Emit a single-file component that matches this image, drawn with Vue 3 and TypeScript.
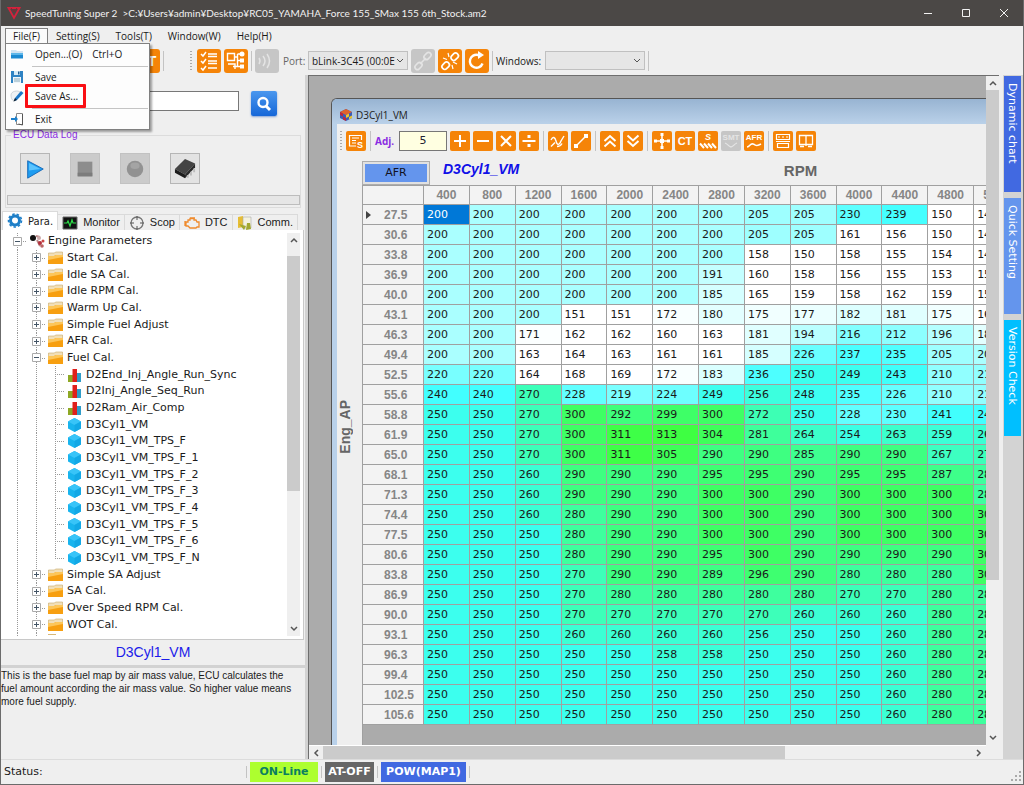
<script setup lang="ts">
import { ref } from 'vue'

interface Shape { d: string; fill?: boolean; w?: number }
interface Label { t: string; x: number; y: number; s: number; italic?: boolean }
interface Glyph { id: string; title: string; shapes: Shape[]; label?: Label; off?: boolean }
interface TreeNode { label: string; level: number; icon: string; sign?: string; last?: boolean }
interface MapRow { load: string; values: number[] }

const adjust = ref('5')
const port = ref('bLink-3C45 (00:0E:')
const filter = ref('')
const activeWindow = ref('')

const menus = ['File(F)', 'Setting(S)', 'Tools(T)', 'Window(W)', 'Help(H)']

const toolGroups: Glyph[][] = [
  [
    { id: 'add', title: 'Add', shapes: [{ d: 'M10 4v12M4 10h12', w: 2 }] },
    { id: 'sub', title: 'Subtract', shapes: [{ d: 'M4 10h12', w: 2 }] },
    { id: 'mul', title: 'Multiply', shapes: [{ d: 'M5 5l10 10M15 5L5 15', w: 2 }] },
    { id: 'div', title: 'Divide', shapes: [{ d: 'M3.500 10h13', w: 2 }, { d: 'M8.500 4h3v3h-3zM8.500 13h3v3h-3z', fill: true }] },
  ],
  [
    { id: 'smooth', title: 'Smooth', shapes: [{ d: 'M3 9c2-4 4-3 5 1s3 5 5 0l3-5M3 15.500l4-4M9 15.500c3 0 4-1 5-3', w: 1.4 }] },
    { id: 'line', title: 'Interpolate', shapes: [{ d: 'M5 15L15 5', w: 1.4 }, { d: 'M3 13h4v4H3zM13 3h4v4h-4z', fill: true }] },
  ],
  [
    { id: 'up', title: 'Increase', shapes: [{ d: 'M4.500 10L10 5l5.500 5M4.500 15.500L10 10.500l5.500 5', w: 2 }] },
    { id: 'down', title: 'Decrease', shapes: [{ d: 'M4.500 4.500L10 9.500l5.500-5M4.500 10L10 15l5.500-5', w: 2 }] },
  ],
  [
    { id: 'move', title: 'Move', shapes: [{ d: 'M10 4v12M4 10h12', w: 1.6 }, { d: 'M8.500 2h3v3h-3zM8.500 15h3v3h-3zM2 8.500h3v3H2zM15 8.500h3v3h-3zM8 8h4v4H8z', fill: true }] },
    { id: 'ct', title: 'CT', shapes: [], label: { t: 'CT', x: 10, y: 14, s: 11 } },
    { id: 's', title: 'Set', shapes: [{ d: 'M2 12.500l4 4.500M6 12.500l4 4.500M10 12.500l4 4.500M14 12.500l4 4.500', w: 2 }], label: { t: 'S', x: 10, y: 9, s: 9, italic: true } },
    { id: 'smt', title: 'SMT', off: true, shapes: [{ d: 'M4 12c3 1 4 4 6 4s3-3 6-4', w: 1.3 }], label: { t: 'SMT', x: 10, y: 9, s: 8 } },
    { id: 'afr', title: 'AFR', shapes: [{ d: 'M3 16c3 0 3-4 6-3s3 3 8 0', w: 1.5 }], label: { t: 'AFR', x: 10, y: 9, s: 8 } },
  ],
  [
    { id: 'rows', title: 'Split rows', shapes: [{ d: 'M3.500 3.500h13v5h-13zM5 6h2M9 6h2M13 6h2M3 10.500h14M4.500 12.500h11v4h-11z', w: 1.2 }] },
    { id: 'cols', title: 'Split columns', shapes: [{ d: 'M3.500 4.500h13v9h-13zM10 4.500V15M4 15.500h4M12 15.500h4', w: 1.3 }] },
  ],
]

const tree: TreeNode[] = [
  { label: 'Engine Parameters', level: 0, icon: 'engine', sign: '-' },
  { label: 'Start Cal.', level: 1, icon: 'folder', sign: '+' },
  { label: 'Idle SA Cal.', level: 1, icon: 'folder', sign: '+' },
  { label: 'Idle RPM Cal.', level: 1, icon: 'folder', sign: '+' },
  { label: 'Warm Up Cal.', level: 1, icon: 'folder', sign: '+' },
  { label: 'Simple Fuel Adjust', level: 1, icon: 'folder', sign: '+' },
  { label: 'AFR Cal.', level: 1, icon: 'folder', sign: '+' },
  { label: 'Fuel Cal.', level: 1, icon: 'folder', sign: '-' },
  { label: 'D2End_Inj_Angle_Run_Sync', level: 2, icon: 'bars' },
  { label: 'D2Inj_Angle_Seq_Run', level: 2, icon: 'bars' },
  { label: 'D2Ram_Air_Comp', level: 2, icon: 'bars' },
  { label: 'D3Cyl1_VM', level: 2, icon: 'cube' },
  { label: 'D3Cyl1_VM_TPS_F', level: 2, icon: 'cube' },
  { label: 'D3Cyl1_VM_TPS_F_1', level: 2, icon: 'cube' },
  { label: 'D3Cyl1_VM_TPS_F_2', level: 2, icon: 'cube' },
  { label: 'D3Cyl1_VM_TPS_F_3', level: 2, icon: 'cube' },
  { label: 'D3Cyl1_VM_TPS_F_4', level: 2, icon: 'cube' },
  { label: 'D3Cyl1_VM_TPS_F_5', level: 2, icon: 'cube' },
  { label: 'D3Cyl1_VM_TPS_F_6', level: 2, icon: 'cube' },
  { label: 'D3Cyl1_VM_TPS_F_N', level: 2, icon: 'cube', last: true },
  { label: 'Simple SA Adjust', level: 1, icon: 'folder', sign: '+' },
  { label: 'SA Cal.', level: 1, icon: 'folder', sign: '+' },
  { label: 'Over Speed RPM Cal.', level: 1, icon: 'folder', sign: '+' },
  { label: 'WOT Cal.', level: 1, icon: 'folder', sign: '+' },
]

const rpm = [400, 800, 1200, 1600, 2000, 2400, 2800, 3200, 3600, 4000, 4400, 4800, 5200]

const source = `27.5 200 200 200 200 200 200 200 205 205 230 239 150 140
30.6 200 200 200 200 200 200 200 205 205 161 156 150 140
33.8 200 200 200 200 200 200 200 158 150 158 155 154 140
36.9 200 200 200 200 200 200 191 160 158 156 155 153 150
40.0 200 200 200 200 200 200 185 165 159 158 162 159 150
43.1 200 200 200 151 151 172 180 175 177 182 181 175 160
46.3 200 200 171 162 162 160 163 181 194 216 212 196 180
49.4 200 200 163 164 163 161 161 185 226 237 235 205 200
52.5 220 220 164 168 169 172 183 236 250 249 243 210 210
55.6 240 240 270 228 219 224 249 256 248 235 226 210 210
58.8 250 250 270 300 292 299 300 272 250 228 230 241 240
61.9 250 250 270 300 311 313 304 281 264 254 263 259 260
65.0 250 250 270 300 311 305 290 290 285 290 290 267 270
68.1 250 250 260 290 290 290 295 295 290 295 295 287 280
71.3 250 250 260 290 290 290 300 300 290 300 300 300 280
74.4 250 250 260 280 290 290 300 300 290 300 300 300 300
77.5 250 250 250 280 290 290 300 300 290 300 300 300 300
80.6 250 250 250 280 290 290 295 300 290 290 290 290 300
83.8 250 250 250 270 290 290 289 296 290 280 280 280 300
86.9 250 250 250 270 280 280 280 280 280 270 270 280 280
90.0 250 250 250 270 270 270 270 270 260 260 260 280 280
93.1 250 250 250 260 260 260 260 256 250 250 260 280 280
96.3 250 250 250 250 250 258 258 250 250 250 260 280 280
99.4 250 250 250 250 250 250 250 250 250 250 260 280 280
102.5 250 250 250 250 250 250 250 250 250 250 260 280 280
105.6 250 250 250 250 250 250 250 250 250 250 260 280 280`

const rows: MapRow[] = source.split('\n').map((line) => {
  const [load, ...rest] = line.split(' ')
  return { load, values: rest.map(Number) }
})

const stops: [number, number, number, number][] = [
  [170, 255, 255, 255],
  [200, 170, 255, 255],
  [220, 120, 255, 255],
  [240, 66, 255, 255],
  [250, 60, 255, 238],
  [260, 60, 255, 212],
  [280, 62, 255, 158],
  [300, 62, 255, 100],
  [313, 62, 255, 66],
]

function heat(v: number): string {
  if (v <= stops[0][0]) return '#fff'
  for (let i = 1; i < stops.length; i++) {
    const a = stops[i - 1]
    const b = stops[i]
    if (v <= b[0]) {
      const k = (v - a[0]) / (b[0] - a[0])
      const c = [1, 2, 3].map((n) => Math.round(a[n] + (b[n] - a[n]) * k))
      return `rgb(${c.join(',')})`
    }
  }
  return 'rgb(62,255,66)'
}
</script>

<template>
  <div class="app">
    <header class="titlebar">
      <svg class="logo" viewBox="0 0 14 14"><path d="M1.500 2h11L7 12z" fill="none" stroke="#d3223c" stroke-width="1.8" /><path d="M4 2l3 4 3-4" fill="none" stroke="#8d2030" /></svg>
      <h1>SpeedTuning Super 2 &nbsp;&gt;C:¥Users¥admin¥Desktop¥RC05_YAMAHA_Force 155_SMax 155 6th_Stock.am2</h1>
      <button class="win" aria-label="Minimize"><svg viewBox="0 0 10 10"><path d="M1 5.500h8" /></svg></button>
      <button class="win" aria-label="Maximize"><svg viewBox="0 0 10 10"><path d="M1.500 1.500h7v7h-7z" /></svg></button>
      <button class="win" aria-label="Close"><svg viewBox="0 0 10 10"><path d="M1 1l8 8M9 1L1 9" /></svg></button>
    </header>

    <nav class="menubar">
      <div v-for="(m, i) in menus" :key="m" class="menu" :class="{ open: i === 0 }">
        <button class="menu-btn">{{ m }}</button>
        <div v-if="i === 0" class="dropdown" role="menu">
          <button class="item" role="menuitem">
            <svg viewBox="0 0 14 14"><path d="M1 3h5l1 1h6v4H1z" fill="#cfe3f2" /><path d="M1 6h12v5.500H1z" fill="#1c8ad2" /><path d="M1 6h12v2H1z" fill="#5cb6ea" /></svg>
            <span>Open...(O)</span><kbd>Ctrl+O</kbd>
          </button>
          <hr>
          <button class="item" role="menuitem">
            <svg viewBox="0 0 14 14"><path d="M1 1h12v12H1z" fill="#2f83c4" /><path d="M4 1h6v4H4z" fill="#d7ecf8" /><path d="M8 1.500h1.500v3H8z" fill="#205c90" /><path d="M3 7h8v6H3z" fill="#eef6fb" /><path d="M4 9h6M4 11h6" stroke="#8ab" /></svg>
            <span>Save</span>
          </button>
          <button class="item marked" role="menuitem">
            <svg viewBox="0 0 14 14"><path d="M1 6c0-4 7-5 9-3l-5 9c-3 0-4-3-4-6z" fill="#eef1f4" stroke="#b4bcc4" stroke-width=".6" /><path d="M4 12l1-3 6-7 2.500 2L7 11z" fill="#1c78c8" /><path d="M3.500 12.500l1.500-3.500 2 2z" fill="#123" /></svg>
            <span class="mark">Save As...</span>
          </button>
          <hr>
          <button class="item" role="menuitem">
            <svg viewBox="0 0 14 14"><path d="M6.500 1.500h6v11h-6z" fill="#fff" stroke="#888" /><path d="M12.500 2v11l-4-1" fill="none" stroke="#555" /><path d="M0 7l3-3v2h4v2H3v2z" fill="#1c80cc" transform="matrix(-1 0 0 1 8 0)" /></svg>
            <span>Exit</span>
          </button>
        </div>
      </div>
    </nav>

    <div class="toolbar">
      <button class="tool first" aria-label="Text"><svg viewBox="0 0 24 24"><text x="16" y="17" class="big">T</text></svg></button>
      <i class="sep" />
      <i class="grip push" />
      <button class="tool" aria-label="Checklist"><svg viewBox="0 0 24 24"><path d="M4 5l2 2 3-4M4 12l2 2 3-4M4 19l2 2 3-4M11 5h9M11 7.500h9M11 12h9M11 14.500h9M11 19h9" fill="none" stroke="#fff" stroke-width="1.500" /></svg></button>
      <button class="tool" aria-label="Diagram"><svg viewBox="0 0 24 24"><path d="M3.500 4.500h7v7h-7zM4 15h7v5M9 17.500h9M13.500 5v12.500M13.500 5h4M10.500 8h3M13.500 11.500h4" fill="none" stroke="#fff" stroke-width="1.400" /><circle cx="18" cy="5" r="2.500" fill="#fff" /><path d="M16 9.500h4v4h-4zM16 15.500h4v4h-4z" fill="#fff" /></svg></button>
      <i class="sep" />
      <button class="tool off" aria-label="Signal"><svg viewBox="0 0 24 24"><path d="M4 9q2 3 0 6M8 7q4 5 0 10M12 5q5 7 0 14" fill="none" stroke="#e4e4e4" stroke-width="1.500" /></svg></button>
      <label class="grey" for="port">Port:</label>
      <div class="combo">
        <select id="port" v-model="port"><option>bLink-3C45 (00:0E:</option></select>
        <svg viewBox="0 0 8 6"><path d="M1 1l3 3 3-3" /></svg>
      </div>
      <button class="tool off" aria-label="Link"><svg viewBox="0 0 24 24"><g fill="none" stroke="#e4e4e4" stroke-width="1.600"><rect x="12.500" y="4.500" width="8" height="5" rx="2.500" transform="rotate(-45 16.500 7)" /><rect x="3.500" y="14.500" width="8" height="5" rx="2.500" transform="rotate(-45 7.500 17)" /><path d="M9 15l6-6" /></g></svg></button>
      <button class="tool" aria-label="Unlink"><svg viewBox="0 0 24 24"><g fill="none" stroke="#fff" stroke-width="1.700"><rect x="12.500" y="5" width="8" height="5.500" rx="2.500" transform="rotate(-45 16.500 7.500)" /><rect x="3.500" y="14" width="8" height="5.500" rx="2.500" transform="rotate(-45 7.500 16.500)" /><path d="M10 4l1 4M5 9l4 1.500M14 16l1 4M15 13l4 2" stroke-width="1.200" /></g></svg></button>
      <button class="tool" aria-label="Refresh"><svg viewBox="0 0 24 24"><path d="M17.500 14.500A6.500 6.500 0 1 1 13 6h3" fill="none" stroke="#fff" stroke-width="2.400" /><path d="M13 2l6 4-6 4z" fill="#fff" /></svg></button>
      <i class="sep" />
      <label for="wins">Windows:</label>
      <div class="combo">
        <select id="wins" v-model="activeWindow"><option value="" /></select>
        <svg viewBox="0 0 8 6"><path d="M1 1l3 3 3-3" /></svg>
      </div>
      <i class="sep" />
    </div>

    <main class="body">
      <aside class="left">
        <form class="search" @submit.prevent>
          <input v-model="filter" type="text" aria-label="Search">
          <button aria-label="Find"><svg viewBox="0 0 26 26"><circle cx="12" cy="11.500" r="4.500" fill="none" stroke="#fff" stroke-width="2.400" /><path d="M15 15l4 4" stroke="#fff" stroke-width="3" /></svg></button>
        </form>

        <fieldset class="log">
          <legend>ECU Data Log</legend>
          <div class="log-buttons">
            <button aria-label="Play"><svg viewBox="0 0 24 24"><path d="M4 3l17 9-17 10z" fill="#1e9cf0" stroke="#1668b8" /><path d="M5.500 5.500v8L18 12z" fill="#5cc4ff" /></svg></button>
            <button class="dim" aria-label="Stop"><svg viewBox="0 0 24 24"><path d="M4 4h16v16H4z" fill="#8d8d8d" /><path d="M4 16h16v4H4z" fill="#7c7c7c" /></svg></button>
            <button class="dim" aria-label="Record"><svg viewBox="0 0 24 24"><circle cx="12" cy="12" r="9" fill="#929292" /><ellipse cx="12" cy="8.500" rx="5" ry="3.500" fill="#a4a4a4" /></svg></button>
            <button aria-label="Chip"><svg viewBox="0 0 24 24"><path d="M1 12L12 1l11 5-11 12z" fill="#444" /><path d="M1 12l11 6v4L1 16z" fill="#1d1d1d" /><path d="M12 18L23 6v4L12 22z" fill="#2b2b2b" /><path d="M15 18.500v3M18.500 15v4M22 11.500v4" stroke="#bbb" stroke-width="2" /></svg></button>
          </div>
          <div class="progress" role="progressbar" aria-label="Log progress" />
        </fieldset>

        <div class="tabs" role="tablist">
          <button class="tab active" role="tab"><svg viewBox="0 0 16 16"><circle cx="8" cy="7.500" r="4.500" fill="none" stroke="#1e7fc8" stroke-width="3" /><circle cx="8" cy="7.500" r="6.500" fill="none" stroke="#1e7fc8" stroke-width="1.600" stroke-dasharray="2.500 2" /></svg>Para.</button>
          <button class="tab" role="tab"><svg viewBox="0 0 16 16"><path d="M1 2h14v12H1z" fill="#111" stroke="#666" /><path d="M2 8h3l1-2 2 5 2-6 1 3h3" fill="none" stroke="#2fe04a" stroke-width="1.200" /></svg>Monitor</button>
          <button class="tab" role="tab"><svg viewBox="0 0 16 16"><circle cx="8" cy="8" r="6" fill="none" stroke="#777" stroke-width="1.300" /><path d="M8 1v4M8 11v4M1 8h4M11 8h4" stroke="#555" /></svg>Scop</button>
          <button class="tab" role="tab"><svg viewBox="0 0 16 16"><path d="M4 5h2V3.500h4V5h2l1 2h2v5h-2l-1 1H6l-2-2H2V7h2zM1 6v5M6 3h5" fill="none" stroke="#ef8a2c" stroke-width="1.300" /></svg>DTC</button>
          <button class="tab" role="tab"><svg viewBox="0 0 16 16"><path d="M1 2l5-1v11l-5 1z" fill="#e6bd35" /><path d="M6 2h8v11H6z" fill="#f4f2e0" stroke="#aaa" stroke-width=".600" /><path d="M2 9l5 6 2-4zM10 8h3l1 6-5 1z" fill="#a2a832" /></svg>Comm.</button>
        </div>

        <div class="tree-box">
          <ul class="tree" role="tree">
            <li v-for="n in tree" :key="n.label" role="treeitem">
              <span v-for="k in n.level + 1" :key="k" class="rail" :class="{ branch: k === n.level + 1, end: k === n.level + 1 && n.last }">
                <svg v-if="n.sign && k === n.level + 1" class="sign" viewBox="0 0 9 9"><path d="M.500.500h8v8h-8z" fill="#fff" stroke="#aaa" /><path :d="n.sign === '+' ? 'M2 4.500h5M4.500 2v5' : 'M2 4.500h5'" stroke="#456" /></svg>
              </span>
              <svg v-if="n.icon === 'folder'" class="ico" viewBox="0 0 16 14"><path d="M.500 2h6l1-1h7v5h-14z" fill="#f1dfb8" stroke="#c8a868" stroke-width=".600" /><path d="M0 5h6l2-1h7v9H0z" fill="#f79f10" /><path d="M0 5h6l2-1h7v2L0 9z" fill="#fcc65a" /></svg>
              <svg v-else-if="n.icon === 'bars'" class="ico" viewBox="0 0 16 14"><path d="M1 7h5v7H1z" fill="#8ea824" /><path d="M10 5h4v9h-4z" fill="#2f9cc8" /><path d="M5.500 1h4.500v13H5.500z" fill="#e0201c" /></svg>
              <svg v-else-if="n.icon === 'cube'" class="ico" viewBox="0 0 16 14"><path d="M7.500 0L14 3.500v7L7.500 14 1 10.500v-7z" fill="#18b4ee" /><path d="M7.500 0L14 3.500 7.500 7 1 3.500z" fill="#38c4f8" /><path d="M7.500 7L14 3.500v7L7.500 14z" fill="#12a8e6" /></svg>
              <svg v-else class="ico" viewBox="0 0 16 14"><circle cx="4" cy="4" r="3" fill="#111" /><path d="M7 2l4 1M8 6l3 6" stroke="#b88" stroke-width="2" /><circle cx="10" cy="4" r="2" fill="#caa" /><circle cx="11" cy="9" r="2" fill="#b2303c" /><circle cx="14" cy="7" r="1.500" fill="#c44" /><circle cx="13" cy="12" r="1.800" fill="#b66" /></svg>
              <span>{{ n.label }}</span>
            </li>
            <li class="cut" aria-hidden="true"><span class="rail" /><span class="rail" /><i /></li>
          </ul>
          <div class="vscroll">
            <button aria-label="Scroll tree up"><svg viewBox="0 0 8 6"><path d="M1 5l3-3 3 3" /></svg></button>
            <i class="thumb tree-thumb" />
            <button aria-label="Scroll tree down"><svg viewBox="0 0 8 6"><path d="M1 1l3 3 3-3" /></svg></button>
          </div>
        </div>

        <h2 class="item-name">D3Cyl1_VM</h2>
        <p class="desc">This is the base fuel map by air mass value, ECU calculates the fuel amount according the air mass value. So higher value means more fuel supply.</p>
      </aside>

      <section class="mdi">
        <div class="mdi-row">
          <div class="canvas">
            <article class="child">
              <header class="child-title">
                <svg viewBox="0 0 14 14"><path d="M7 1l6 3v6l-6 3-6-3V4z" fill="#3a5cb8" /><path d="M7 1l6 3-6 3-6-3z" fill="#e0622c" /><path d="M7 7l3-1.500v3L7 10zM10 9l3-1.500V10l-3 1.500z" fill="#ecc52d" /><path d="M1 4l3 1.500v3L1 7zM4 8.500L7 10v3l-3-1.500z" fill="#c02838" /></svg>
                D3Cyl1_VM
              </header>
              <div class="child-main">
                <div class="child-tools">
                  <i class="grip" />
                  <button class="mini" aria-label="Save map"><svg viewBox="0 0 20 20"><path d="M10 15H3.500V4.500h12V9M6 7h7M6 9.500h4M6 12h4" fill="none" stroke="#fff" stroke-width="1.200" /><text x="14" y="17" class="lab" font-size="9">S</text></svg></button>
                  <i class="sep" />
                  <label class="adj" for="adj">Adj.</label>
                  <input id="adj" v-model="adjust" type="text">
                  <template v-for="(g, gi) in toolGroups" :key="gi">
                    <i v-if="gi" class="sep" />
                    <div class="group">
                      <button v-for="t in g" :key="t.id" class="mini" :class="{ off: t.off }" :aria-label="t.title">
                        <svg viewBox="0 0 20 20">
                          <path v-for="(s, si) in t.shapes" :key="si" :d="s.d" :fill="s.fill ? 'currentColor' : 'none'" :stroke="s.fill ? 'none' : 'currentColor'" :stroke-width="s.w" />
                          <text v-if="t.label" class="lab" :x="t.label.x" :y="t.label.y" :font-size="t.label.s" :font-style="t.label.italic ? 'italic' : 'normal'">{{ t.label.t }}</text>
                        </svg>
                      </button>
                    </div>
                  </template>
                </div>
                <div class="map-head">
                  <button class="afr">AFR</button>
                  <h3>D3Cyl1_VM</h3>
                  <span class="axis-x">RPM</span>
                </div>
                <div class="map">
                  <div class="axis-y"><span>Eng_AP</span></div>
                  <div class="grid">
                    <table>
                      <thead>
                        <tr><th class="corner" /><th v-for="r in rpm" :key="r" scope="col">{{ r }}</th></tr>
                      </thead>
                      <tbody>
                        <tr v-for="(row, ri) in rows" :key="row.load">
                          <th scope="row" :class="{ current: ri === 0 }">{{ row.load }}</th>
                          <td v-for="(v, ci) in row.values" :key="ci" :class="{ sel: ri === 0 && ci === 0 }" :style="{ backgroundColor: ri === 0 && ci === 0 ? '#0078d7' : heat(v) }">{{ v }}</td>
                        </tr>
                      </tbody>
                    </table>
                  </div>
                </div>
              </div>
            </article>
          </div>
          <div class="vscroll">
            <button aria-label="Scroll up"><svg viewBox="0 0 8 6"><path d="M1 5l3-3 3 3" /></svg></button>
            <i class="thumb main-thumb" />
            <button aria-label="Scroll down"><svg viewBox="0 0 8 6"><path d="M1 1l3 3 3-3" /></svg></button>
          </div>
        </div>
        <div class="hscroll">
          <button aria-label="Scroll left"><svg viewBox="0 0 6 8"><path d="M5 1L2 4l3 3" /></svg></button>
          <i class="hthumb" />
          <button aria-label="Scroll right"><svg viewBox="0 0 6 8"><path d="M1 1l3 3-3 3" /></svg></button>
        </div>
      </section>

      <nav class="side">
        <button class="royal">Dynamic chart</button>
        <button class="corn">Quick Setting</button>
        <button class="sky">Version Check</button>
      </nav>
    </main>

    <footer class="status">
      <span class="state">Status:</span>
      <i class="sep" />
      <strong class="online">ON-Line</strong>
      <i class="sep" />
      <strong class="at">AT-OFF</strong>
      <i class="sep" />
      <strong class="pow">POW(MAP1)</strong>
      <i class="sep" />
      <svg class="size" viewBox="0 0 10 10"><path d="M8 0h2v2H8zM4 4h2v2H4zM8 4h2v2H8zM0 8h2v2H0zM4 8h2v2H4zM8 8h2v2H8z" fill="#aaa" /></svg>
    </footer>
  </div>
</template>

<style>
body { margin: 0; }
</style>

<style scoped>
.app, .app * { box-sizing: border-box; }
.app {
  display: flex; flex-direction: column; height: 100vh; overflow: hidden;
  background: #efefef; color: #1a1a1a;
  border: 1px solid #6b6b6b; border-top: 0;
  font: 10px/14px "Open Sans", "Noto Sans", sans-serif;
}
button, input, select { font: inherit; color: inherit; border: 0; padding: 0; margin: 0; background: none; border-radius: 0; }
h1, h2, h3, p, ul { margin: 0; padding: 0; font-weight: normal; font-size: inherit; }
svg { display: block; flex: none; }

.titlebar { flex: none; display: flex; align-items: center; height: 26px; padding-left: 6px; background: #4b4846; color: #f2f2f2; }
.logo { width: 14px; height: 14px; }
.titlebar h1 { flex: 1; padding-left: 4px; white-space: nowrap; font-family: Lato, "Open Sans", sans-serif; }
.win { display: flex; align-items: center; justify-content: center; width: 38px; height: 26px; }
.win svg { width: 10px; height: 10px; fill: none; stroke: #f2f2f2; }

.menubar { flex: none; display: flex; height: 20px; padding-left: 4px; }
.menu { position: relative; padding-top: 2px; }
.menu-btn { height: 16px; padding: 0 7px; border: 1px solid transparent; white-space: nowrap; }
.open .menu-btn { background: #fbfbfb; border-color: #808080; border-bottom: 0; height: 17px; padding-bottom: 2px; }
.dropdown {
  position: absolute; z-index: 5; left: 0; top: 17px; width: 145px; padding: 1px 1px 0;
  background: #fdfdfd; border: 1px solid #808080; box-shadow: 2px 2px 2px rgba(0, 0, 0, .35);
}
.item { display: flex; align-items: center; width: 100%; height: 19px; padding: 0 0 1px 3px; white-space: nowrap; }
.item svg { width: 14px; height: 14px; margin-right: 11px; }
.item kbd { font: inherit; margin-left: 10px; }
.marked svg { margin-right: 1px; }
.mark { display: flex; align-items: center; height: 24px; width: 61px; padding-left: 7px; border: 3px solid #fa0f14; border-radius: 1px; position: relative; z-index: 1; }
.dropdown hr { height: 4px; margin: 0 0 0 25px; border: 0; background: linear-gradient(#c4c4c4, #c4c4c4) 0 2px / 100% 1px no-repeat; }

.toolbar { flex: none; display: flex; align-items: center; height: 29px; padding-left: 135px; }
.tool { width: 24px; height: 24px; border-radius: 3px; background: #f58408; margin-right: 3px; color: #fff; }
.tool svg { width: 24px; height: 24px; }
.big { font: bold 14px "Liberation Sans", sans-serif; fill: #fff; text-anchor: middle; }
.tool.off, .mini.off { background: #c6c6c6; color: #e4e4e4; }
.sep { width: 1px; height: 20px; background: #c3c3c3; margin: 0 3px 0 0; flex: none; }
.grip { width: 2px; height: 20px; flex: none; background: repeating-linear-gradient(#aaa 0 1px, transparent 1px 3px); }
.push { margin: 0 5px 0 23px; }
.toolbar label { width: 49px; text-align: left; white-space: nowrap; }
.toolbar label.grey { color: #666; width: 25px; margin-left: 1px; }
.combo { display: grid; align-items: center; width: 100px; height: 19px; margin-right: 3px; border: 1px solid #c0c0c0; background: #e6e6e6; }
.combo select, .combo svg { grid-area: 1 / 1; }
.combo select { appearance: none; width: 100%; height: 17px; padding: 0 12px 0 3px; overflow: hidden; }
.combo svg { justify-self: end; margin-right: 3px; width: 8px; height: 6px; pointer-events: none; fill: none; stroke: #555; }

.body { flex: 1; display: flex; min-height: 0; }
.left { flex: none; width: 307px; display: flex; flex-direction: column; border-right: 3px solid #d2d2d2; min-height: 0; }
.search { flex: none; display: flex; height: 41px; margin-top: 13px; padding: 3px 0 0 40px; gap: 12px; }
.search input { width: 198px; height: 20px; border: 1px solid #777; background: #fff; padding: 0 4px; }
.search button { width: 26px; height: 25px; border-radius: 2px; background: linear-gradient(#4a97ee, #1667d8); box-shadow: 0 1px 2px rgba(30, 90, 190, .5); }
.log { flex: none; height: 79px; margin: 0 4px 3px 4px; padding: 12px 0 0; border: 1px solid #dcdcdc; min-width: 0; }
.log legend { height: 12px; margin-left: 5px; padding: 0 2px; color: #8a2be2; font: 10px/12px "Liberation Sans", sans-serif; }
.log-buttons { display: flex; gap: 20px; padding-left: 14px; }
.log-buttons button { display: flex; align-items: center; justify-content: center; width: 30px; height: 31px; background: #e3e3e3; border: 1px solid #b6b6b6; }
.log-buttons .dim { background: #cbcbcb; border-color: #c2c2c2; }
.log-buttons svg { width: 22px; height: 22px; }
.progress { height: 10px; margin: 11px 0 0 1px; background: #e6e6e6; border: 1px solid #bdbdbd; }

.tabs { flex: none; display: flex; align-items: flex-end; height: 19px; padding-left: 1px; font: 11px/15px "Liberation Sans", sans-serif; }
.tab { display: flex; align-items: center; gap: 5px; height: 16px; padding: 0 4px 0 4px; border: 1px solid #dadada; border-width: 1px 1px 0 0; white-space: nowrap; }
.tab.active { height: 19px; background: #fff; border-left-width: 1px; font-family: "DejaVu Sans", sans-serif; font-size: 10px; }
.tab svg { width: 16px; height: 16px; }

.tree-box { flex: 1; min-height: 0; display: flex; margin-right: 1px; padding: 3px 3px 3px 7px; background: #fff; border-bottom: 1px solid #c8c8c8; border-right: 1px solid #c8c8c8; }
.tree { flex: 1; min-width: 0; display: grid; grid-template-rows: repeat(24, minmax(0, 1fr)) 3px; list-style: none; overflow: hidden; font: 11px/16px "DejaVu Sans", sans-serif; }
.tree li { display: flex; align-items: center; min-height: 0; overflow: hidden; white-space: nowrap; }
.rail {
  flex: none; align-self: stretch; width: 19px; display: flex; align-items: center; justify-content: center;
  background: repeating-linear-gradient(#999 0 1px, transparent 1px 2px) 9px 0 / 1px 100% no-repeat;
}
.rail.branch {
  background:
    repeating-linear-gradient(#999 0 1px, transparent 1px 2px) 9px 0 / 1px 100% no-repeat,
    repeating-linear-gradient(90deg, #999 0 1px, transparent 1px 2px) 9px 8px / 10px 1px no-repeat;
}
.rail.end {
  background:
    repeating-linear-gradient(#999 0 1px, transparent 1px 2px) 9px 0 / 1px 50% no-repeat,
    repeating-linear-gradient(90deg, #999 0 1px, transparent 1px 2px) 9px 8px / 10px 1px no-repeat;
}
.sign { width: 9px; height: 9px; }
.ico { width: 16px; height: 14px; margin: 0 3px 0 2px; }
.tree .cut { align-items: flex-start; }
.cut i { width: 8px; height: 1px; margin: 1px 0 0 2px; background: #d8b878; }

.vscroll { flex: none; width: 13px; display: flex; flex-direction: column; background: #efefef; }
.vscroll button { flex: none; display: flex; align-items: center; justify-content: center; height: 14px; }
.vscroll svg { width: 8px; height: 6px; }
.vscroll svg, .hscroll svg { fill: none; stroke: #555; stroke-width: 1.5; }
.thumb { background: #cbcbcb; }
.tree-thumb { flex: 232 0 0; margin-top: 9px; }
.main-thumb { flex: 490 0 0; }
.tree-thumb + button { flex: 129 0 14px; align-items: flex-end; padding-bottom: 4px; }
.main-thumb + button { flex: 151 0 14px; align-items: flex-end; padding-bottom: 4px; }

.item-name { flex: none; height: 28px; border-bottom: 3px solid #d2d2d2; color: #1b1bea; text-align: center; font: 14px/25px "Liberation Sans", sans-serif; }
.desc { flex: none; height: 91px; padding: 1px 7px 0 0; font: 10px/13px "Liberation Sans", sans-serif; }

.mdi { flex: 1; min-width: 0; display: flex; flex-direction: column; border-top: 1px solid #6e6e6e; border-left: 1px solid #6e6e6e; }
.mdi-row { flex: 1; min-height: 0; display: flex; }
.canvas { flex: 1; min-width: 0; display: flex; padding: 22px 0 0 22px; background: #ababab; overflow: hidden; }
.child { flex: 1; min-width: 0; display: flex; flex-direction: column; border: 1px solid #555; border-width: 1px 0 0 1px; border-top-left-radius: 6px; background: #b9d1ea; overflow: hidden; }
.child-title { flex: none; display: flex; align-items: center; gap: 3px; height: 25px; padding: 6px 0 0 7px; background: linear-gradient(#98b4d2, #bad1e9); color: #222; }
.child-title svg { width: 14px; height: 14px; }
.child-main { flex: 1; min-height: 0; display: flex; flex-direction: column; margin-left: 5px; background: #efefef; }
.child-tools { flex: none; display: flex; align-items: center; height: 33px; padding-left: 3px; }
.child-tools .grip { margin-right: 4px; }
.child-tools .sep { margin: 0 4px; }
.mini { flex: none; width: 20px; height: 20px; border-radius: 2px; background: #f58408; color: #fff; }
.mini svg { width: 20px; height: 20px; }
.lab { font-family: "Liberation Sans", sans-serif; font-weight: bold; fill: currentColor; text-anchor: middle; }
.adj { width: 24px; color: #8a2be2; font-weight: bold; }
.child-tools input { width: 48px; height: 20px; margin-right: 3px; border: 1px solid #777; background: #ffffe1; text-align: center; color: #223; font: 11px/18px "DejaVu Sans", sans-serif; }
.group { display: flex; gap: 3px; }
.map-head { flex: none; display: flex; align-items: center; height: 28px; padding: 4px 0 0 25px; }
.afr { flex: none; width: 68px; height: 24px; border: 1px solid #adadad; background: #6495ed; box-shadow: inset 0 0 0 2px #e1e1e1; color: #112; font-size: 11px; font-family: "DejaVu Sans", sans-serif; }
.map-head h3 { flex: none; width: 96px; padding: 0 0 8px 13px; color: #1010e8; font: italic bold 14px/16px "Liberation Sans", sans-serif; }
.axis-x { flex: 1; text-align: center; padding: 0 0 4px 89px; color: #666; font: bold 15px/16px "Liberation Sans", sans-serif; }
.map { flex: 1; min-height: 0; display: flex; }
.axis-y { flex: none; width: 25px; display: flex; padding-top: 215px; }
.axis-y span { align-self: flex-start; writing-mode: vertical-rl; transform: rotate(180deg); color: #666; font: bold 14px/16px "Liberation Sans", sans-serif; }
.grid { flex: 1; min-width: 0; overflow: hidden; background: #ababab; border-left: 1px solid #a0a0a0; }
table { table-layout: fixed; width: 657px; border-collapse: separate; border-spacing: 0; }
th { height: 20px; padding: 0; background: #f3f3f3; color: #868686; font: bold 12px/18px "Liberation Sans", sans-serif; border: 1px solid #a0a0a0; border-width: 0 1px 1px 0; }
thead th { border-top-width: 1px; }
.corner { width: 61px; }
tbody th { padding-left: 21px; text-align: left; }
th.current { padding-left: 3px; }
th.current::before { content: ""; display: inline-block; margin-right: 13px; border: 4px solid transparent; border-left: 5px solid #444; border-right: 0; }
td { height: 20px; padding: 0 0 0 3px; border: 1px solid #a0a0a0; border-width: 0 1px 1px 0; font: 11px/18px "DejaVu Sans", sans-serif; }
td.sel { color: #fff; }

.hscroll { flex: none; display: flex; height: 14px; margin-right: 13px; background: #efefef; border-top: 1px solid #fff; }
.hscroll button { display: flex; align-items: center; justify-content: center; width: 14px; }
.hscroll svg { width: 6px; height: 8px; }
.hthumb { flex: 462 0 0; background: #cbcbcb; }
.hthumb + button { flex: 187 0 14px; justify-content: flex-end; padding-right: 4px; }

.side { flex: none; width: 24px; display: flex; flex-direction: column; gap: 6px; padding: 1px 2px 0 5px; background: linear-gradient(#efefef, #efefef) 0 0 / 4px 100% no-repeat #d3d3d3; }
.side button { height: 116px; padding-top: 7px; width: 17px; writing-mode: vertical-rl; text-align: left; color: #fff; font: 11px/17px "DejaVu Sans", sans-serif; }
.royal { background: #4169e1; }
.corn { background: #6495ed; }
.sky { background: #00bfff; }

.status { flex: none; display: flex; align-items: center; height: 25px; border-top: 1px solid #dcdcdc; padding-left: 3px; font: 11px/20px "DejaVu Sans", sans-serif; }
.state { width: 239px; }
.status strong { height: 20px; text-align: center; }
.status .sep { height: 12px; margin: 0 3px; }
.online { width: 68px; background: #adff2f; color: #0a8060; }
.at { width: 49px; background: #666; color: #fff; }
.pow { width: 85px; background: #4169e1; color: #fff; }
.size { width: 10px; height: 10px; margin: 8px 2px 0 auto; }
</style>
